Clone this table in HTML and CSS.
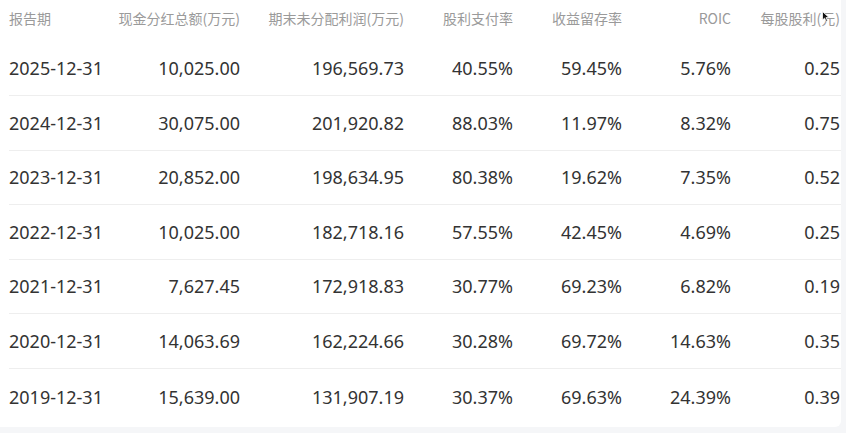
FILE: index.html
```html
<!DOCTYPE html>
<html lang="zh-CN">
<head>
<meta charset="utf-8">
<title>分红数据</title>
<link rel="stylesheet" href="styles.css">
</head>
<body>
<div class="card">
  <div class="head">
    <div class="cell left">报告期</div>
    <div class="cell">现金分红总额(万元)</div>
    <div class="cell">期末未分配利润(万元)</div>
    <div class="cell">股利支付率</div>
    <div class="cell">收益留存率</div>
    <div class="cell">ROIC</div>
    <div class="cell last">每股股利(元)
      <svg class="cursor" width="8" height="11" viewBox="0 0 8 11"><path d="M0.5 0.5 L0.5 9 L2.6 7.1 L4.1 10.4 L5.5 9.8 L4 6.6 L7 6.6 Z" fill="#111" stroke="#fff" stroke-width="0.8"/></svg>
    </div>
  </div>
  <div class="row"><div class="cell left">2025-12-31</div><div class="cell">10,025.00</div><div class="cell">196,569.73</div><div class="cell">40.55%</div><div class="cell">59.45%</div><div class="cell">5.76%</div><div class="cell">0.25</div></div>
  <div class="row"><div class="cell left">2024-12-31</div><div class="cell">30,075.00</div><div class="cell">201,920.82</div><div class="cell">88.03%</div><div class="cell">11.97%</div><div class="cell">8.32%</div><div class="cell">0.75</div></div>
  <div class="row"><div class="cell left">2023-12-31</div><div class="cell">20,852.00</div><div class="cell">198,634.95</div><div class="cell">80.38%</div><div class="cell">19.62%</div><div class="cell">7.35%</div><div class="cell">0.52</div></div>
  <div class="row"><div class="cell left">2022-12-31</div><div class="cell">10,025.00</div><div class="cell">182,718.16</div><div class="cell">57.55%</div><div class="cell">42.45%</div><div class="cell">4.69%</div><div class="cell">0.25</div></div>
  <div class="row"><div class="cell left">2021-12-31</div><div class="cell">7,627.45</div><div class="cell">172,918.83</div><div class="cell">30.77%</div><div class="cell">69.23%</div><div class="cell">6.82%</div><div class="cell">0.19</div></div>
  <div class="row"><div class="cell left">2020-12-31</div><div class="cell">14,063.69</div><div class="cell">162,224.66</div><div class="cell">30.28%</div><div class="cell">69.72%</div><div class="cell">14.63%</div><div class="cell">0.35</div></div>
  <div class="row lastrow"><div class="cell left">2019-12-31</div><div class="cell">15,639.00</div><div class="cell">131,907.19</div><div class="cell">30.37%</div><div class="cell">69.63%</div><div class="cell">24.39%</div><div class="cell">0.39</div></div>
</div>
</body>
</html>
```

FILE: styles.css
```css
html, body {
  margin: 0;
  padding: 0;
  background: #f5f6f8;
}
body {
  width: 846px;
  height: 433px;
  overflow: hidden;
  font-family: "Noto Sans", "Noto Sans CJK SC", sans-serif;
}
.card {
  width: 841px;
  height: 427px;
  background: #fff;
  border-bottom-right-radius: 6px;
  box-sizing: border-box;
}
.head, .row {
  display: grid;
  grid-template-columns: 100px 131px 164px 109px 109px 109px 109px;
  margin-left: 9px;
  align-items: center;
}
.head {
  height: 41.5px;
  padding-bottom: 5px;
  box-sizing: border-box;
  font-family: "Noto Sans CJK SC", sans-serif;
  font-size: 14px;
  color: #9a9a9a;
}
.row {
  height: 54.5px;
  box-sizing: border-box;
  border-bottom: 1px solid #eeeeee;
  font-size: 18px;
  color: #333333;
}
.row.lastrow {
  border-bottom: none;
  height: 57px;
}
.cell {
  text-align: right;
  white-space: nowrap;
}
.cell.left {
  text-align: left;
}
.cell.last {
  position: relative;
}
.cursor {
  position: absolute;
  right: 10px;
  top: 3px;
}
```
